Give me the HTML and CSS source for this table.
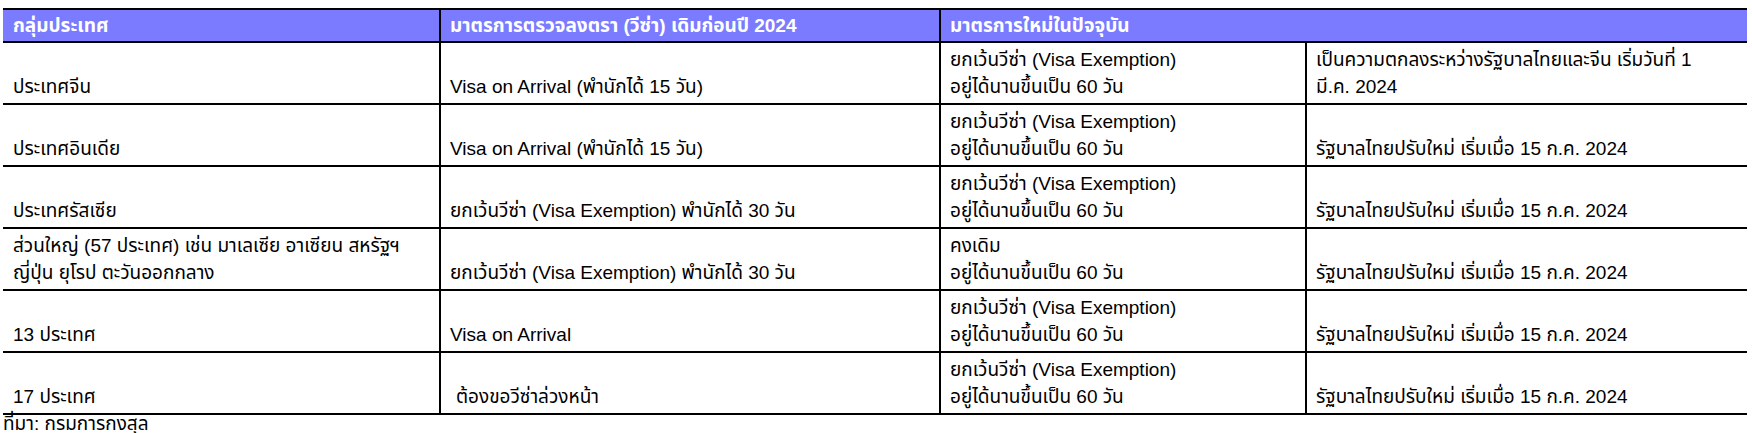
FILE: index.html
```html
<!DOCTYPE html>
<html lang="th">
<head>
<meta charset="utf-8">
<title>มาตรการวีซ่า</title>
<link rel="stylesheet" href="styles.css">
</head>
<body>
<div class="page">
  <table class="visa">
    <colgroup>
      <col class="c1"><col class="c2"><col class="c3"><col class="c4">
    </colgroup>
    <thead>
      <tr>
        <th>กลุ่มประเทศ</th>
        <th>มาตรการตรวจลงตรา (วีซ่า) เดิมก่อนปี 2024</th>
        <th colspan="2">มาตรการใหม่ในปัจจุบัน</th>
      </tr>
    </thead>
    <tbody>
      <tr>
        <td>ประเทศจีน</td>
        <td>Visa on Arrival (พำนักได้ 15 วัน)</td>
        <td>ยกเว้นวีซ่า (Visa Exemption)<br>อยู่ได้นานขึ้นเป็น 60 วัน</td>
        <td>เป็นความตกลงระหว่างรัฐบาลไทยและจีน เริ่มวันที่ 1<br>มี.ค. 2024</td>
      </tr>
      <tr>
        <td>ประเทศอินเดีย</td>
        <td>Visa on Arrival (พำนักได้ 15 วัน)</td>
        <td>ยกเว้นวีซ่า (Visa Exemption)<br>อยู่ได้นานขึ้นเป็น 60 วัน</td>
        <td>รัฐบาลไทยปรับใหม่ เริ่มเมื่อ 15 ก.ค. 2024</td>
      </tr>
      <tr>
        <td>ประเทศรัสเซีย</td>
        <td>ยกเว้นวีซ่า (Visa Exemption) พำนักได้ 30 วัน</td>
        <td>ยกเว้นวีซ่า (Visa Exemption)<br>อยู่ได้นานขึ้นเป็น 60 วัน</td>
        <td>รัฐบาลไทยปรับใหม่ เริ่มเมื่อ 15 ก.ค. 2024</td>
      </tr>
      <tr>
        <td>ส่วนใหญ่ (57 ประเทศ) เช่น มาเลเซีย อาเซียน สหรัฐฯ<br>ญี่ปุ่น ยุโรป ตะวันออกกลาง</td>
        <td>ยกเว้นวีซ่า (Visa Exemption) พำนักได้ 30 วัน</td>
        <td>คงเดิม<br>อยู่ได้นานขึ้นเป็น 60 วัน</td>
        <td>รัฐบาลไทยปรับใหม่ เริ่มเมื่อ 15 ก.ค. 2024</td>
      </tr>
      <tr>
        <td>13 ประเทศ</td>
        <td>Visa on Arrival</td>
        <td>ยกเว้นวีซ่า (Visa Exemption)<br>อยู่ได้นานขึ้นเป็น 60 วัน</td>
        <td>รัฐบาลไทยปรับใหม่ เริ่มเมื่อ 15 ก.ค. 2024</td>
      </tr>
      <tr>
        <td>17 ประเทศ</td>
        <td class="indent">ต้องขอวีซ่าล่วงหน้า</td>
        <td>ยกเว้นวีซ่า (Visa Exemption)<br>อยู่ได้นานขึ้นเป็น 60 วัน</td>
        <td>รัฐบาลไทยปรับใหม่ เริ่มเมื่อ 15 ก.ค. 2024</td>
      </tr>
    </tbody>
  </table>
  <p class="source">ที่มา: กรมการกงสุล</p>
</div>
</body>
</html>
```
FILE: styles.css
```css
html, body {
  margin: 0;
  padding: 0;
  background: #ffffff;
}
.page {
  padding: 8px 5px 0 3px;
  font-family: Tahoma, "Liberation Sans", "Noto Sans Thai", "Noto Sans", sans-serif;
  font-size: 19px;
  color: #000;
}
.visa {
  border-collapse: separate;
  border-spacing: 0;
  width: 1744px;
  table-layout: fixed;
}
.c1 { width: 436px; }
.c2 { width: 500px; }
.c3 { width: 366px; }
.c4 { width: 442px; }
.visa th {
  box-sizing: border-box;
  background: #7b7bff;
  color: #fff;
  font-weight: bold;
  text-align: left;
  height: 35px;
  padding: 0 9px;
  vertical-align: middle;
  border-top: 2px solid #000;
  border-bottom: 2px solid #000;
  border-left: 2px solid #000;
  line-height: 26px;
  white-space: nowrap;
}
.visa th:first-child { border-left: none; padding-left: 10px; }
.visa td {
  box-sizing: border-box;
  height: 62px;
  padding: 0 9px 3px;
  vertical-align: bottom;
  line-height: 27px;
  border-bottom: 2px solid #000;
  border-left: 2px solid #000;
  white-space: nowrap;
}
.visa td:first-child { border-left: none; padding-left: 10px; }
.visa .indent { padding-left: 15px; }
.source {
  margin: 0;
  line-height: 18px;
}
```
